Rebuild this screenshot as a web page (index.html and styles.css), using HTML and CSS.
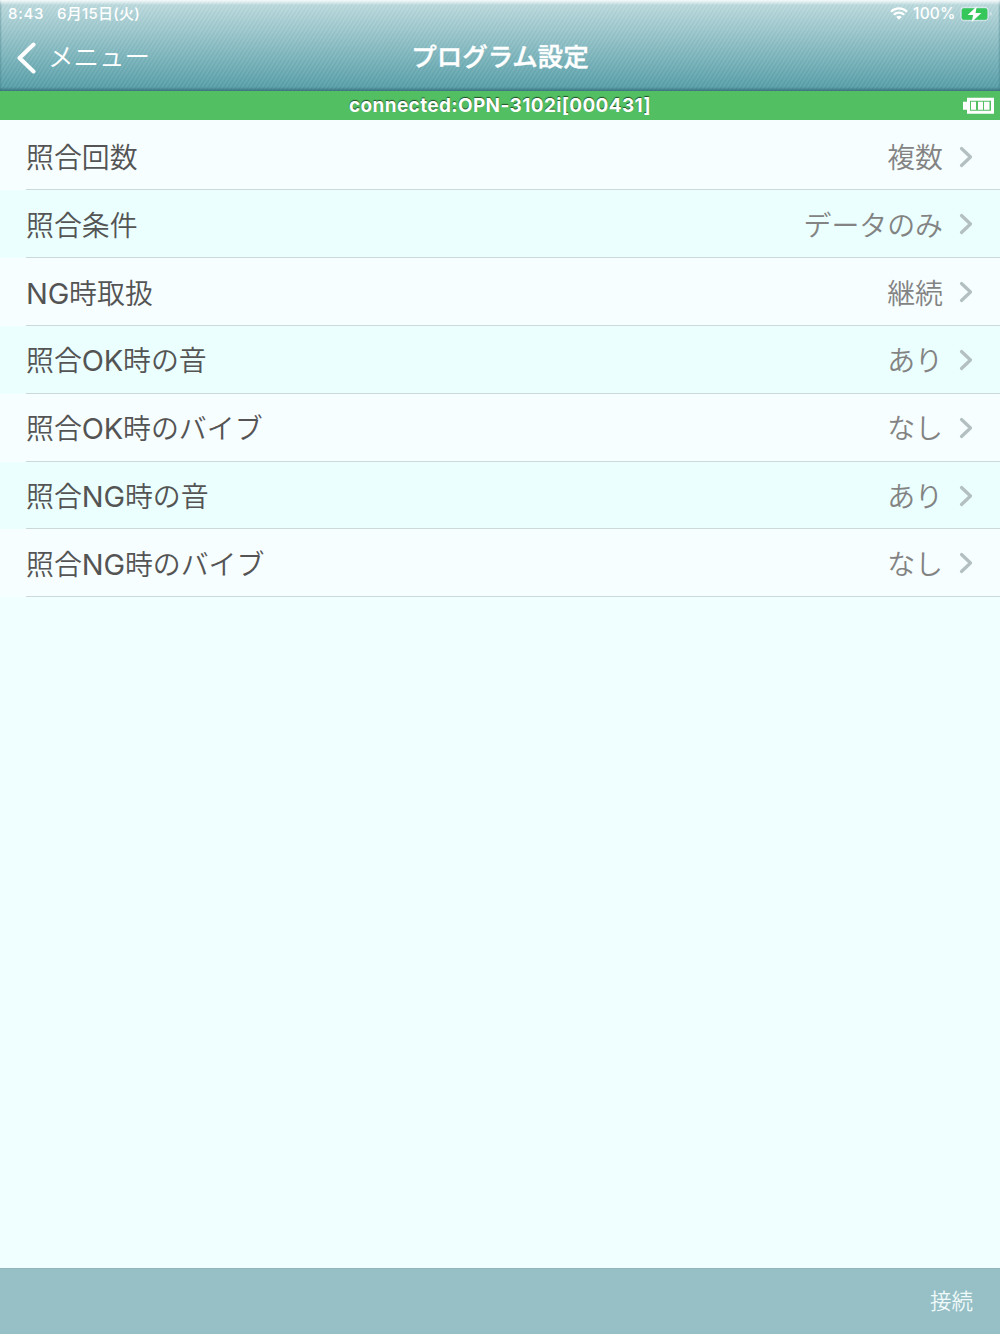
FILE: index.html
```html
<!DOCTYPE html>
<html lang="ja">
<head>
<meta charset="utf-8">
<title>プログラム設定</title>
<link rel="stylesheet" href="styles.css">
</head>
<body>
<div class="screen">
  <header class="header">
    <div class="status">
      <span class="clock">8:43</span>
      <span class="date">6月15日(火)</span>
      <svg class="wifi" width="18" height="13" viewBox="0 0 18 13" fill="none" stroke="#fff" stroke-width="2.2"><path d="M1 4.7C5.4.3 12.6.3 17 4.7M3.8 7.7c2.9-2.8 7.5-2.8 10.4 0"/><path d="M9 12.7 6.2 9.9c1.6-1.4 4-1.4 5.6 0z" fill="#fff" stroke="none"/></svg>
      <span class="percent">100%</span>
      <svg class="charge" width="34" height="16" viewBox="0 0 34 16"><rect x=".8" y="1.3" width="27.5" height="13.4" rx="3.5" fill="none" stroke="#fff" stroke-opacity=".5"/><rect x="1.8" y="2.3" width="25.5" height="11.4" rx="2" fill="#35c759"/><path d="M30.3 6v4c2-.8 2-3.2 0-4z" fill="#fff" fill-opacity=".55"/><path d="M16.8.3 7.6 9h5.5l-1.4 6.9L21.4 7h-5.9z" fill="#fff"/></svg>
    </div>
    <nav class="nav">
      <a class="back"><svg width="20" height="32" viewBox="0 0 20 32" fill="none" stroke="#fff" stroke-width="4" stroke-linecap="round" stroke-linejoin="round"><path d="M17.5 2.5 3.5 16l14 13.5"/></svg><span>メニュー</span></a>
      <h1 class="title">プログラム設定</h1>
    </nav>
  </header>
  <div class="connection">
    <span class="device">connected:OPN-3102i[000431]</span>
    <svg class="battery" width="31" height="17" viewBox="0 0 31 17" fill="#fff"><path fill-rule="evenodd" d="M4 .7h27v16H4v-4H0v-8h4zM7 3.7v10h21v-10z"/><path d="M8 4.7h5v8H8zM15 4.7h5v8h-5zM21 4.7h5.5v8H21z"/></svg>
  </div>
  <ul class="list">
    <li class="row"><span class="label">照合回数</span><span class="value">複数</span><svg class="chevron" viewBox="0 0 14 22"><path d="m2.5 2.5 9 8.5-9 8.5"/></svg></li>
    <li class="row"><span class="label">照合条件</span><span class="value">データのみ</span><svg class="chevron" viewBox="0 0 14 22"><path d="m2.5 2.5 9 8.5-9 8.5"/></svg></li>
    <li class="row"><span class="label"><span class="latin">NG</span>時取扱</span><span class="value">継続</span><svg class="chevron" viewBox="0 0 14 22"><path d="m2.5 2.5 9 8.5-9 8.5"/></svg></li>
    <li class="row"><span class="label">照合<span class="latin">OK</span>時の音</span><span class="value">あり</span><svg class="chevron" viewBox="0 0 14 22"><path d="m2.5 2.5 9 8.5-9 8.5"/></svg></li>
    <li class="row"><span class="label">照合<span class="latin">OK</span>時のバイブ</span><span class="value">なし</span><svg class="chevron" viewBox="0 0 14 22"><path d="m2.5 2.5 9 8.5-9 8.5"/></svg></li>
    <li class="row"><span class="label">照合<span class="latin">NG</span>時の音</span><span class="value">あり</span><svg class="chevron" viewBox="0 0 14 22"><path d="m2.5 2.5 9 8.5-9 8.5"/></svg></li>
    <li class="row"><span class="label">照合<span class="latin">NG</span>時のバイブ</span><span class="value">なし</span><svg class="chevron" viewBox="0 0 14 22"><path d="m2.5 2.5 9 8.5-9 8.5"/></svg></li>
  </ul>
  <footer class="toolbar"><span>接続</span></footer>
</div>
</body>
</html>
```
FILE: styles.css
```css
* { box-sizing: border-box; }
body { margin: 0; font-family: Inter, "Noto Sans CJK JP", sans-serif; }
.screen {
  width: 1000px; height: 1334px;
  display: flex; flex-direction: column;
  background: #f0ffff;
}
.header {
  height: 91px; flex: none; color: #fff;
  background:
    linear-gradient(to bottom, rgba(255,255,255,.85), rgba(255,255,255,0) 5px),
    linear-gradient(to top, rgba(40,85,100,.6), rgba(40,85,100,0) 4px),
    linear-gradient(to right, rgba(60,120,130,.4), rgba(60,120,130,0) 2px, rgba(60,120,130,0) 998px, rgba(60,120,130,.4)),
    repeating-linear-gradient(122deg, rgba(255,255,255,.09) 0, rgba(30,90,100,.05) 1.7px, rgba(255,255,255,.09) 3.4px),
    linear-gradient(to bottom, #c1dde0, #519ba5);
}
.status {
  height: 27px; display: flex; align-items: center;
  padding: 0 6px 0 8px; font-size: 15px; font-weight: 500; line-height: 27px;
}
.clock { width: 49px; letter-spacing: .7px; }
.date { flex: 1; font-size: 15px; letter-spacing: .25px; }
.wifi { margin-right: 5px; }
.percent { width: 47px; font-size: 15.5px; font-weight: 500; letter-spacing: .2px; }
.nav {
  height: 61px; display: grid; grid-template-columns: 1fr auto 1fr;
  align-items: center;
}
.back { display: flex; align-items: center; gap: 12px; padding-left: 16px; font-size: 25.5px; font-weight: 350; }
.back span { padding-bottom: 6px; }
.title { margin: 0; padding-bottom: 6px; font-size: 25.5px; font-weight: 500; -webkit-text-stroke: .4px #fff; }
.connection {
  height: 29px; flex: none; background: #52bf62; color: #fff;
  display: grid; grid-template-columns: 1fr auto 1fr; align-items: center;
  padding-right: 6px;
}
.device {
  grid-column: 2; margin-left: 6px; padding-top: 1px; font-size: 19px; letter-spacing: .35px; font-weight: 700; line-height: 28px;
  text-shadow: 0 -1px 1px rgba(0,0,0,.6);
}
.battery { justify-self: end; }
.list { list-style: none; margin: 0; padding: 2.7px 0 0; background: #f6feff; }
.row {
  height: 67.8px; display: flex; align-items: center; padding: 0 27px 0 26px;
  font-size: 27.9px; font-weight: 350; color: #545454;
  background:
    linear-gradient(#cbd9da, #cbd9da) 26px 100% / 100% 1px no-repeat,
    #f6feff;
}
.row:nth-child(even) { background-color: #eafffe; }
.label { flex: 1; padding-bottom: 1px; }
.latin { font-size: 29px; font-weight: 400; letter-spacing: -.2px; }
.value { color: #838383; margin-right: 16px; padding-bottom: 1px; }
.chevron { width: 14px; height: 22px; fill: none; stroke: #b3bfc1; stroke-width: 3.2; stroke-linecap: round; stroke-linejoin: round; }
.toolbar {
  margin-top: auto; height: 66px; background: #96c0c6; border-top: 1px solid #91b7bd;
  display: flex; align-items: center; justify-content: flex-end; padding: 0 27px 5px 0;
  color: #f0fafa; font-size: 21.5px; font-weight: 350;
}
```
